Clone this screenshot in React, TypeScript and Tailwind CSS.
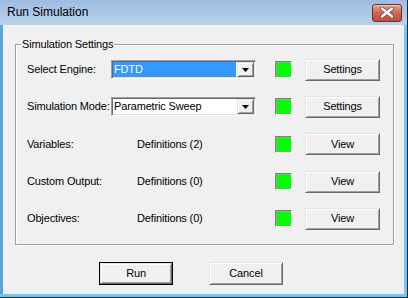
import React from "react";

// classic win32 3d edges
const raised = "border border-t-[#e3e3e3] border-l-[#e3e3e3] border-b-[#696969] border-r-[#696969] shadow-[inset_1px_1px_0_#ffffff,inset_-1px_-1px_0_#a0a0a0]";
const sunken = "border border-t-[#a0a0a0] border-l-[#a0a0a0] border-b-[#ffffff] border-r-[#ffffff] shadow-[inset_1px_1px_0_#696969,inset_-1px_-1px_0_#e3e3e3]";

function Button({ label, isDefault = false, className = "" }: { label: string; isDefault?: boolean; className?: string }) {
  if (isDefault) {
    return (
      <div className={`border border-black bg-[#f0f0f0] ${className}`}>
        <div className={`${raised} w-full h-full flex items-center justify-center bg-[#f0f0f0]`}>{label}</div>
      </div>
    );
  }
  return <div className={`${raised} bg-[#f0f0f0] flex items-center justify-center ${className}`}>{label}</div>;
}

function Combo({ value, selected = false }: { value: string; selected?: boolean }) {
  return (
    <div className={`${sunken} w-[145px] h-[19px] bg-white flex p-px`}>
      <div className={`flex-1 flex items-center pl-px ${selected ? "bg-[#3399ff] text-white" : "text-black"}`}>{value}</div>
      <div className={`${raised} w-[17px] bg-[#f0f0f0] flex items-center justify-center ml-px`}>
        <svg width="7" height="4" viewBox="0 0 7 4">
          <path d="M0 0H7L3.5 4Z" fill="#000" />
        </svg>
      </div>
    </div>
  );
}

function Status() {
  return <div className="w-[17px] h-[17px] border border-t-[#808080] border-l-[#808080] border-b-white border-r-white bg-[#00ff00] shadow-[inset_1px_1px_0_#a0a0a0]" />;
}

const rows: { label: string; kind: "combo" | "text"; value: string; selected?: boolean; action: string; h: string }[] = [
  { label: "Select Engine:", kind: "combo", value: "FDTD", selected: true, action: "Settings", h: "h-[37px]" },
  { label: "Simulation Mode:", kind: "combo", value: "Parametric Sweep", action: "Settings", h: "h-[37px]" },
  { label: "Variables:", kind: "text", value: "Definitions (2)", action: "View", h: "h-[38px]" },
  { label: "Custom Output:", kind: "text", value: "Definitions (0)", action: "View", h: "h-[37px]" },
  { label: "Objectives:", kind: "text", value: "Definitions (0)", action: "View", h: "h-[37px]" },
];

export default function App() {
  return (
    <div className="w-[408px] h-[298px] flex flex-col bg-[#6cc9f1] border-r border-b border-[#1b2833] text-[11px] leading-[13px] tracking-[-0.15px] text-black" style={{ fontFamily: '"Liberation Sans", Arial, sans-serif' }}>
      {/* Title bar */}
      <div className="h-[25px] flex items-center pl-[7px] bg-gradient-to-b from-[#9ebbe1] to-[#bad2ec]">
        <span className="text-[12px] leading-[15px] tracking-normal">Run Simulation</span>
        <div className="ml-auto mr-[5px] w-[30px] h-[18px] rounded-[3px] border border-[#6e2f2b] bg-gradient-to-b from-[#e2a495] via-[#cf6452] to-[#c4493a] flex items-center justify-center shadow-[inset_0_1px_0_#f0c4b8]">
          <svg width="14" height="11" viewBox="0 0 14 11">
            <path d="M2 1.5L12 9.5M12 1.5L2 9.5" stroke="#6a4a48" strokeWidth="4" strokeLinecap="round" />
            <path d="M2 1.5L12 9.5M12 1.5L2 9.5" stroke="#ffffff" strokeWidth="2.4" strokeLinecap="round" />
          </svg>
        </div>
      </div>

      {/* Client area */}
      <div className="flex-1 flex flex-col bg-[#f0f0f0] border-l-[3px] border-l-[#57a5dc] mr-[3px] mb-[3px]">
        <fieldset className="mt-[13px] ml-[12px] w-[379px] border border-[#a0a0a0] shadow-[1px_1px_0_#ffffff,inset_1px_1px_0_#ffffff] pb-[7px]">
          <legend className="ml-[5px] px-px">Simulation Settings</legend>
          {rows.map((r) => (
            <div key={r.label} className={`${r.h} flex items-center pl-[11px] whitespace-nowrap`}>
              <div className="w-[84px]">{r.label}</div>
              <div className="w-[145px]">{r.kind === "combo" ? <Combo value={r.value} selected={r.selected} /> : <div className="pl-[26px]">{r.value}</div>}</div>
              <div className="ml-[19px]">
                <Status />
              </div>
              <Button label={r.action} className="ml-[13px] w-[75px] h-[22px]" />
            </div>
          ))}
        </fieldset>

        <div className="flex mt-[17px] pl-[96px] gap-[36px]">
          <Button label="Run" isDefault className="w-[74px] h-[23px]" />
          <Button label="Cancel" className="w-[74px] h-[23px]" />
        </div>
      </div>
    </div>
  );
}
